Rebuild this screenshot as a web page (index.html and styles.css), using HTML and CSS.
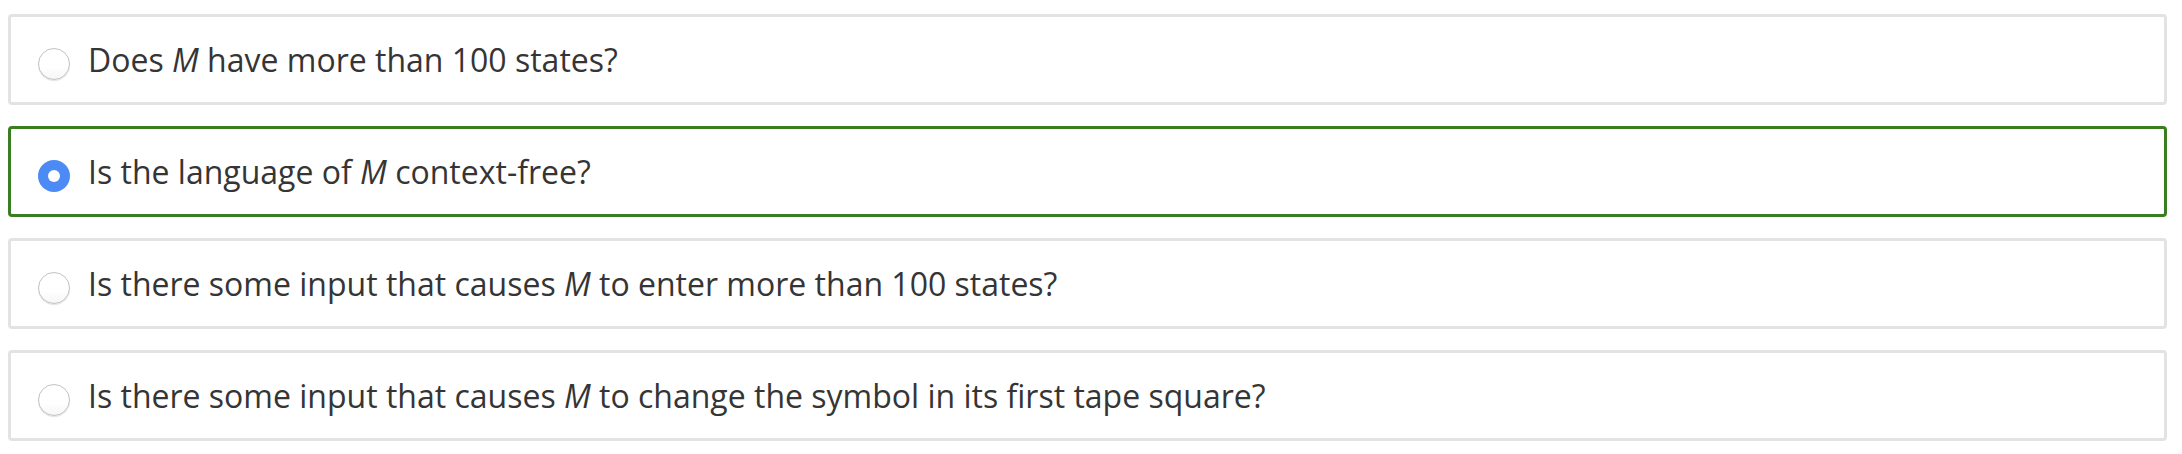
FILE: index.html
```html
<!DOCTYPE html>
<html lang="en">
<head>
<meta charset="utf-8">
<title>Question options</title>
<link rel="stylesheet" href="styles.css">
</head>
<body>
<ul class="options">
  <li class="option">
    <span class="radio"></span>
    <span class="label">Does <i>M</i> have more than 100 states?</span>
  </li>
  <li class="option selected">
    <span class="radio checked"></span>
    <span class="label">Is the language of <i>M</i> context-free?</span>
  </li>
  <li class="option">
    <span class="radio"></span>
    <span class="label">Is there some input that causes <i>M</i> to enter more than 100 states?</span>
  </li>
  <li class="option">
    <span class="radio"></span>
    <span class="label">Is there some input that causes <i>M</i> to change the symbol in its first tape square?</span>
  </li>
</ul>
</body>
</html>
```

FILE: styles.css
```css
html, body {
  margin: 0;
  background: #ffffff;
}
body {
  padding: 14px 15px 0 8px;
  font-family: "Open Sans", "Liberation Sans", sans-serif;
  color: #333333;
}
.options {
  list-style: none;
  margin: 0;
  padding: 0;
  display: flex;
  flex-direction: column;
  gap: 21px;
}
.option {
  box-sizing: border-box;
  height: 91px;
  border: 3px solid #e3e3e3;
  border-radius: 4px;
  display: flex;
  align-items: center;
  padding: 8px 0 0 27px;
  gap: 18px;
}
.option.selected {
  border-color: #3b7d23;
}
.radio {
  box-sizing: border-box;
  flex: none;
  width: 32px;
  height: 32px;
  border-radius: 50%;
  border: 1px solid #c2c2c2;
  background: linear-gradient(#ffffff 60%, #f6f6f6);
  box-shadow: 0 1px 1px rgba(0,0,0,0.12);
  position: relative;
}
.radio.checked {
  border: none;
  background: #4c8bf5;
  box-shadow: none;
}
.radio.checked::after {
  content: "";
  position: absolute;
  left: 10px;
  top: 10px;
  width: 12px;
  height: 12px;
  border-radius: 50%;
  background: #ffffff;
}
.label {
  font-size: 32px;
  line-height: 40px;
  margin-bottom: 8px;
  white-space: nowrap;
  color: #353535;
}
.label i {
  font-style: italic;
}
```
